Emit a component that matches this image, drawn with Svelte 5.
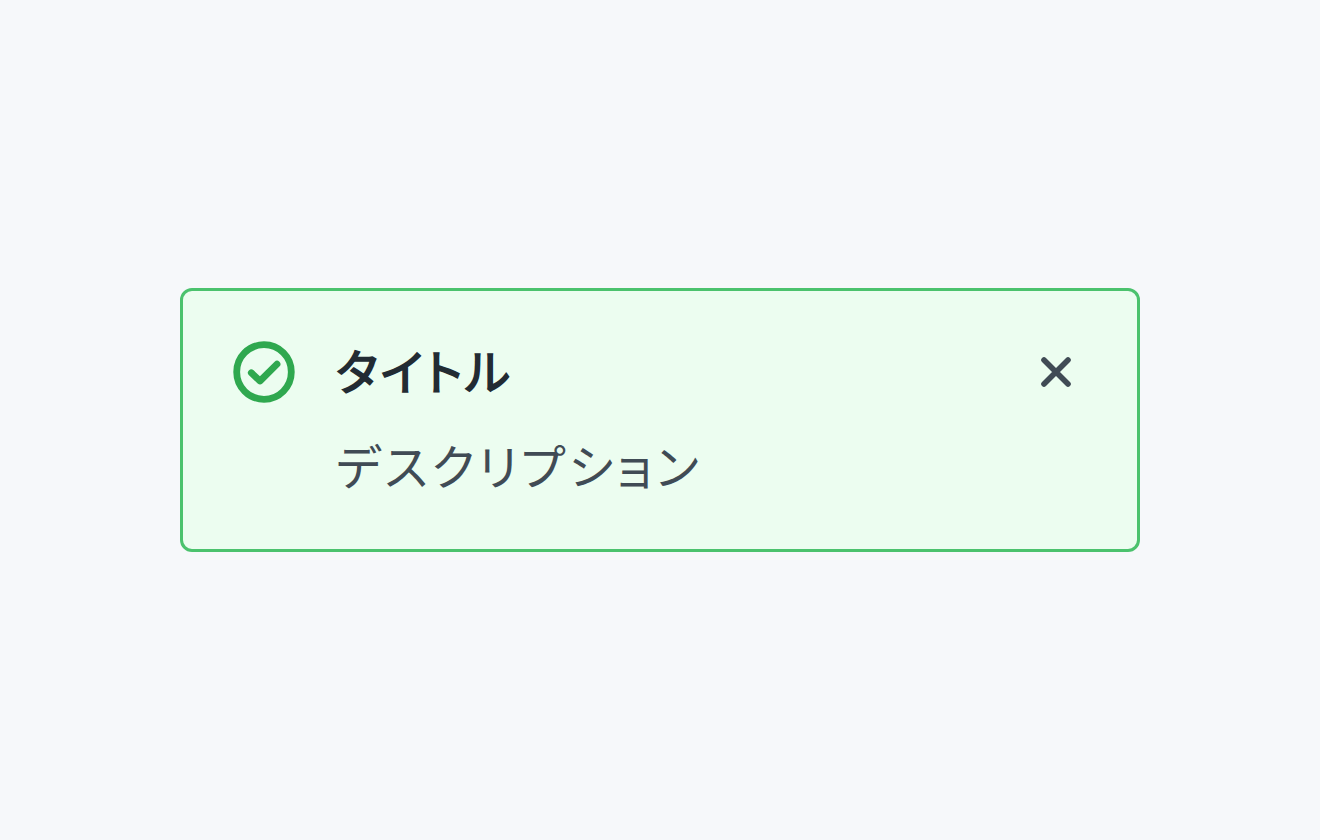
<script lang="ts">
  let title = 'タイトル';
  let description = 'デスクリプション';
  let open = $state(true);
</script>

<main class="page">
  {#if open}
    <div class="alert" role="status">
      <svg class="status-icon" viewBox="0 0 72 72" aria-hidden="true">
        <circle cx="36" cy="36" r="27.3" />
        <path d="M23.3 36.8 32 45 49 28.2" />
      </svg>
      <div class="content">
        <div class="title">{title}</div>
        <div class="description">{description}</div>
      </div>
      <button type="button" class="close" aria-label="閉じる" onclick={() => (open = false)}>
        <svg viewBox="0 0 72 72" aria-hidden="true">
          <path d="M24 24 48 48M48 24 24 48" />
        </svg>
      </button>
    </div>
  {/if}
</main>

<style>
  :global(body) {
    background: #f6f8fa;
  }

  .page {
    display: flex;
    align-items: center;
    justify-content: center;
    height: 840px;
    font-family: 'Noto Sans CJK JP', sans-serif;
  }

  .alert {
    display: flex;
    align-items: flex-start;
    box-sizing: border-box;
    width: 960px;
    height: 264px;
    padding: 45px;
    background: #ecfdf0;
    border: 3px solid #4bc26d;
    border-radius: 12px;
  }

  .status-icon {
    flex-shrink: 0;
    width: 72px;
    height: 72px;
    fill: none;
    stroke: #2fa84f;
    stroke-width: 6.8;
    stroke-linecap: round;
    stroke-linejoin: round;
  }

  .content {
    flex: 1;
    min-width: 0;
    margin-top: -3px;
    margin-left: 36px;
    font-size: 48px;
    line-height: 72px;
    font-feature-settings: 'palt';
  }
  /* semibold: regular outlines thickened by a stroke */
  .title {
    font-weight: 400;
    color: #222b33;
    letter-spacing: 2.6px;
    -webkit-text-stroke: 1.6px #222b33;
  }
  .description {
    margin-top: 23px;
    color: #404b55;
    letter-spacing: 3.6px;
  }

  .close {
    flex-shrink: 0;
    width: 72px;
    height: 72px;
    padding: 0;
    background: transparent;
    border: none;
    cursor: pointer;
  }
  .close svg {
    display: block;
    width: 72px;
    height: 72px;
    fill: none;
    stroke: #404b55;
    stroke-width: 5.6;
    stroke-linecap: round;
  }
</style>
